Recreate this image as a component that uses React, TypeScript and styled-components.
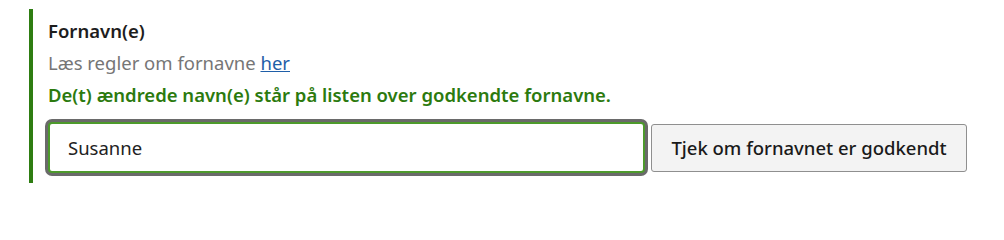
import React from "react";
import styled, { createGlobalStyle } from "styled-components";

const GlobalStyle = createGlobalStyle`
    body {
        margin: 0;
        background: #ffffff;
        font-family: "Noto Sans", "Open Sans", Arial, sans-serif;
    }
`;

const Page = styled.div`
    padding: 9px 0 0 29px;
`;

const FieldGroup = styled.div`
    border-left: 4px solid #2e7d12;
    padding: 6px 0 10px 15px;
    width: 940px;
`;

const Label = styled.label`
    display: block;
    font-size: 18.5px;
    line-height: 32px;
    font-weight: 600;
    color: #1d1d1d;
`;

const Hint = styled.div`
    font-size: 18.5px;
    line-height: 32px;
    color: #767676;
`;

const HintLink = styled.a`
    color: #1f5ea8;
    text-decoration: underline;
`;

const Success = styled.div`
    font-size: 18.5px;
    line-height: 32px;
    font-weight: 600;
    color: #2c7a0e;
`;

const InputRow = styled.div`
    display: flex;
    align-items: center;
    gap: 6px;
    margin-top: 11px;
`;

const NameInput = styled.input`
    box-sizing: border-box;
    width: 597px;
    height: 51px;
    padding: 0 18px;
    border: 2px solid #4d9a2c;
    border-radius: 4px;
    box-shadow: 0 0 0 3px #6a6a6a;
    font-family: inherit;
    font-size: 18.5px;
    color: #222222;
    background: #ffffff;
    outline: none;
`;

const CheckButton = styled.button`
    box-sizing: border-box;
    width: 316px;
    height: 48px;
    border: 1px solid #8f8f8f;
    border-radius: 3px;
    background: #f3f3f3;
    font-family: inherit;
    font-size: 18.5px;
    font-weight: 500;
    color: #1a1a1a;
    cursor: pointer;
`;

const App: React.FC = () => {
    return (
        <>
            <GlobalStyle />
            <Page>
                <FieldGroup>
                    <Label htmlFor="fornavn">Fornavn(e)</Label>
                    <Hint>
                        Læs regler om fornavne <HintLink href="#">her</HintLink>
                    </Hint>
                    <Success>De(t) ændrede navn(e) står på listen over godkendte fornavne.</Success>
                    <InputRow>
                        <NameInput id="fornavn" defaultValue="Susanne" />
                        <CheckButton type="button">Tjek om fornavnet er godkendt</CheckButton>
                    </InputRow>
                </FieldGroup>
            </Page>
        </>
    );
};

export default App;
